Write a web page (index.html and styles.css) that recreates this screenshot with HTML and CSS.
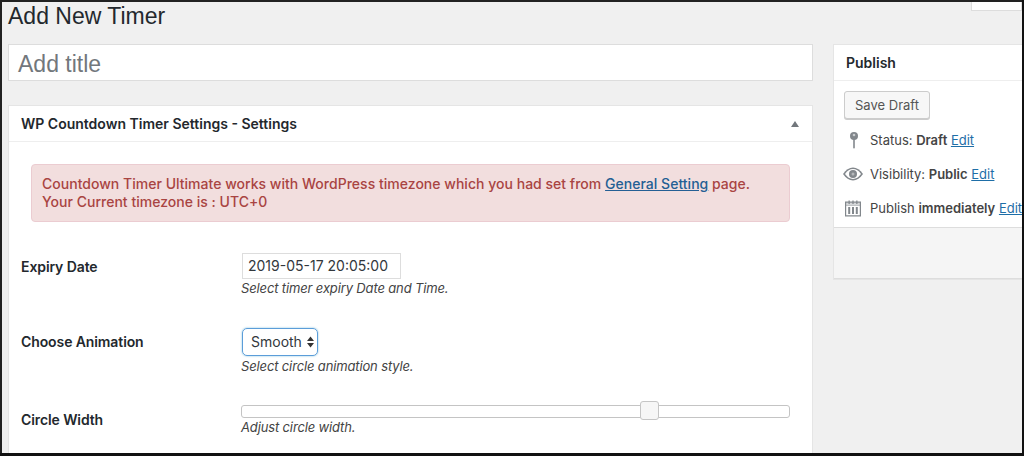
FILE: index.html
```html
<!DOCTYPE html>
<html lang="en">
<head>
<meta charset="utf-8">
<title>Add New Timer</title>
<link rel="stylesheet" href="styles.css">
</head>
<body>
<div class="screen">
  <div class="screen-tab"></div>
  <h1 class="page-title">Add New Timer</h1>
  <div class="columns">
    <main class="main-col">
      <div class="title-box">Add title</div>
      <section class="card">
        <header class="card-head">
          <h2>WP Countdown Timer Settings - Settings</h2>
          <span class="toggle"></span>
        </header>
        <div class="card-body">
          <div class="alert">Countdown Timer Ultimate works with WordPress timezone which you had set from <a href="#">General Setting</a> page.<br>Your Current timezone is : UTC+0</div>
          <div class="row row-date">
            <div class="label">Expiry Date</div>
            <div class="field">
              <div class="text-input">2019-05-17 20:05:00</div>
              <p class="hint">Select timer expiry Date and Time.</p>
            </div>
          </div>
          <div class="row row-anim">
            <div class="label">Choose Animation</div>
            <div class="field">
              <div class="select">Smooth
                <svg class="arrows" width="7" height="12" viewBox="0 0 7 12"><path d="M3.500 0.500 7 5H0zM3.500 11.500 0 7h7z" fill="#333"/></svg>
              </div>
              <p class="hint">Select circle animation style.</p>
            </div>
          </div>
          <div class="row row-width">
            <div class="label">Circle Width</div>
            <div class="field">
              <div class="slider"><span class="thumb"></span></div>
              <p class="hint">Adjust circle width.</p>
            </div>
          </div>
        </div>
      </section>
    </main>
    <aside class="side-col">
      <section class="publish">
        <h2 class="publish-head">Publish</h2>
        <div class="publish-body">
          <div class="button">Save Draft</div>
          <div class="meta meta-status">
            <svg class="ico" width="20" height="20" viewBox="0 0 20 20"><circle cx="11" cy="6" r="4" fill="#82878c"/><circle cx="11" cy="5" r="1.300" fill="#c9ccce"/><rect x="10.200" y="9" width="1.600" height="9.500" rx=".7" fill="#82878c"/></svg>
            <span>Status: <b>Draft</b> <a href="#">Edit</a></span>
          </div>
          <div class="meta meta-vis">
            <svg class="ico" width="20" height="20" viewBox="0 0 20 20"><path d="M0 10C2.800 5.700 6.200 3.500 10 3.500s7.200 2.200 10 6.500c-2.800 4.300-6.200 6.500-10 6.500S2.800 14.300 0 10z" fill="#82878c"/><path d="M2 10C4.200 6.800 6.900 5.100 10 5.100s5.800 1.700 8 4.900c-2.200 3.200-4.900 4.900-8 4.900S4.200 13.200 2 10z" fill="#fff"/><circle cx="10" cy="10" r="4" fill="#82878c"/><circle cx="10" cy="10" r="1.500" fill="#b4b7ba"/></svg>
            <span>Visibility: <b>Public</b> <a href="#">Edit</a></span>
          </div>
          <div class="meta meta-pub">
            <svg class="ico" width="20" height="20" viewBox="0 0 20 20"><path d="M2 3.500h16V18.500H2zM3.200 7.500V17.300H16.800V7.500z" fill="#82878c" fill-rule="evenodd"/><path d="M3.200 4.700h13.600V7H3.200z" fill="#d5d7d9"/><path d="M5.200 9h2v7h-2zM9 9h2v7H9zM12.800 9h2v7h-2z" fill="#82878c"/><path d="M5.500 2.500h1.300v3.500H5.500zM9.350 2.500h1.300v3.500H9.350zM13.200 2.500h1.300v3.500h-1.300z" fill="#82878c"/></svg>
            <span>Publish <b>immediately</b> <a href="#">Edit</a></span>
          </div>
        </div>
        <div class="publish-foot"></div>
      </section>
    </aside>
  </div>
</div>
</body>
</html>
```
FILE: styles.css
```css
* { box-sizing: border-box; }
html, body { margin: 0; padding: 0; height: 456px; overflow: hidden; }
body {
  font-family: Inter, "Liberation Sans", Arial, sans-serif;
  font-size: 13px;
  color: #32373c;
  background: #111;
}
a { color: #1e6ea7; text-decoration: underline; }
h1, h2, p { margin: 0; font-weight: 400; }

.screen {
  position: relative;
  width: 1022px;
  height: 453px;
  border: solid #222;
  border-width: 2px 0 0 2px;
  background: #f0f0f0;
  padding-left: 6px;
  overflow: hidden;
}
.screen-tab {
  position: absolute;
  top: 0;
  right: 0;
  width: 51px;
  height: 9px;
  background: #fff;
  border: 1px solid #ddd;
  border-top: 0;
}
.page-title {
  height: 42px;
  font-family: "Liberation Sans", Arial, sans-serif;
  font-size: 23px;
  line-height: 28px;
  color: #23282d;
}
.columns { display: flex; gap: 20px; align-items: flex-start; }
.main-col { flex: 0 0 805px; }
.side-col { flex: 0 0 189px; }

.title-box {
  height: 37px;
  padding: 4px 9px 0;
  background: #fff;
  border: 1px solid #ddd;
  font-family: "Liberation Sans", Arial, sans-serif;
  font-size: 23px;
  line-height: 31px;
  color: #72777c;
}
.card {
  margin-top: 24px;
  height: 360px;
  background: #fff;
  border: 1px solid #e5e5e5;
}
.card-head {
  display: flex;
  justify-content: space-between;
  align-items: center;
  height: 36px;
  padding: 0 13px 0 12px;
  border-bottom: 1px solid #eee;
}
.card-head h2 { font-size: 14px; font-weight: 600; color: #23282d; }
.toggle {
  width: 0;
  height: 0;
  border: solid transparent;
  border-width: 0 4px 6px;
  border-bottom-color: #72777c;
}
.card-body { padding: 22px 12px 0; }
.alert {
  width: 759px;
  height: 58px;
  margin-left: 10px;
  padding: 10px 10px;
  background: #f2dede;
  border: 1px solid #ebccd1;
  border-radius: 4px;
  color: #a94442;
  font-size: 14px;
  font-weight: 500;
  line-height: 18px;
  letter-spacing: 0.02px;
}
.alert a { color: #245f94; font-weight: 500; }
.row { display: flex; }
.row-date { margin-top: 31px; }
.row-anim { margin-top: 31px; }
.row-width { margin-top: 31px; }
.label {
  flex: 0 0 221px;
  font-size: 14px;
  font-weight: 600;
  letter-spacing: -0.1px;
  color: #23282d;
  line-height: 28px;
}
.field { flex: 1; }
.hint {
  margin-left: -1px;
  font-size: 13px;
  font-style: italic;
  letter-spacing: -0.14px;
  line-height: 18px;
  color: #444;
}
.text-input {
  width: 159px;
  height: 26px;
  padding: 0 5px;
  border: 1px solid #ddd;
  font-size: 14px;
  line-height: 24px;
  color: #32373c;
}
.select {
  display: flex;
  align-items: center;
  justify-content: space-between;
  width: 76px;
  height: 28px;
  padding: 0 3px 2px 8px;
  border: 1px solid #5b9dd9;
  border-radius: 5px;
  box-shadow: 0 0 2px rgba(30, 140, 190, 0.6);
  font-size: 14px;
  color: #32373c;
}
.arrows { margin-top: 2px; }
.row-anim .hint { margin-top: 1px; }
.slider {
  position: relative;
  width: 549px;
  height: 13px;
  margin: -1px 0 0 -1px;
  border: 1px solid #c4c4c4;
  border-radius: 3px;
}
.thumb {
  position: absolute;
  top: -5px;
  left: 398px;
  width: 19px;
  height: 19px;
  background: #f6f6f6;
  border: 1px solid #c5c5c5;
  border-radius: 3px;
}

.publish {
  width: 189px;
  background: #fff;
  border: 1px solid #e5e5e5;
  border-right: 0;
}
.publish-head {
  height: 36px;
  padding-left: 12px;
  font-size: 14px;
  font-weight: 600;
  line-height: 36px;
  color: #23282d;
  border-bottom: 1px solid #eee;
}
.publish-body { height: 146px; padding: 10px 0 0 9px; }
.button {
  width: 86px;
  height: 28px;
  margin-left: 1px;
  background: #f7f7f7;
  border: 1px solid #ccc;
  border-radius: 3px;
  box-shadow: 0 1px 0 #ccc;
  text-align: center;
  font-size: 13px;
  line-height: 26px;
  color: #555;
}
.meta {
  display: flex;
  align-items: center;
  white-space: nowrap;
  height: 20px;
  font-size: 13px;
  color: #444;
}
.meta b { font-weight: 600; }
.ico { flex: none; margin-right: 7px; }
.meta-status { margin-top: 11px; }
.meta-vis, .meta-pub { margin-top: 14px; }
.publish-foot {
  height: 52px;
  background: #f5f5f5;
  border-top: 1px solid #ddd;
  border-bottom: 1px solid #ddd;
}
```
